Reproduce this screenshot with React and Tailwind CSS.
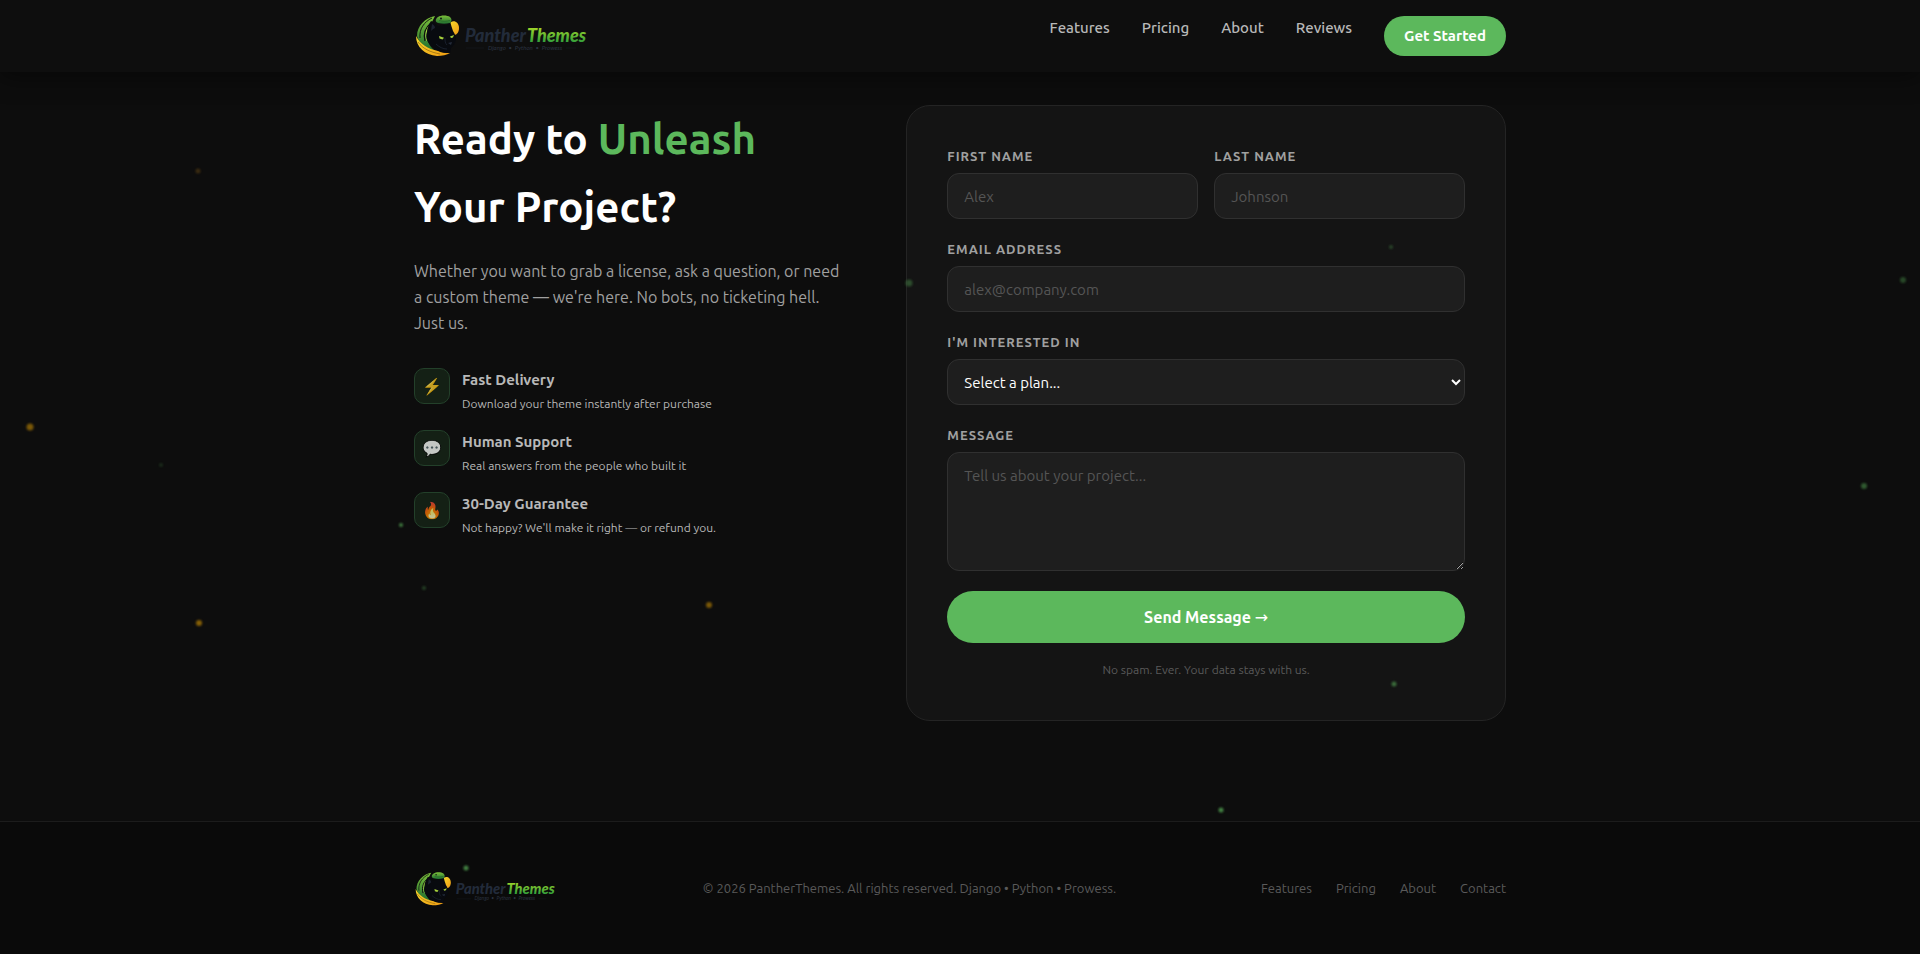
import React, { useId, useState } from 'react'

const navLinks = ['Features', 'Pricing', 'About', 'Reviews']
const footerLinks = ['Features', 'Pricing', 'About', 'Contact']

const perks = [
  { icon: '⚡', title: 'Fast Delivery', text: 'Download your theme instantly after purchase' },
  { icon: '💬', title: 'Human Support', text: 'Real answers from the people who built it' },
  { icon: '🔥', title: '30-Day Guarantee', text: "Not happy? We'll make it right — or refund you." }
]

// x / y are percentages of the viewport, size in px
const particles = [
  { x: 10.3, y: 17.9, size: 5, color: '#f5a623', opacity: 0.2 },
  { x: 1.58, y: 44.8, size: 7, color: '#ffb300', opacity: 0.45 },
  { x: 8.4, y: 48.7, size: 4, color: '#5cb85c', opacity: 0.18 },
  { x: 10.35, y: 65.3, size: 6, color: '#ffb300', opacity: 0.5 },
  { x: 20.88, y: 55.0, size: 4, color: '#5cb85c', opacity: 0.65 },
  { x: 22.1, y: 61.6, size: 4, color: '#5cb85c', opacity: 0.3 },
  { x: 36.95, y: 63.4, size: 6, color: '#ffb300', opacity: 0.45 },
  { x: 31.77, y: 21.1, size: 4, color: '#ffb300', opacity: 0.2 },
  { x: 47.33, y: 29.7, size: 7, color: '#5cb85c', opacity: 0.35 },
  { x: 72.47, y: 25.9, size: 4, color: '#5cb85c', opacity: 0.3 },
  { x: 99.1, y: 29.4, size: 6, color: '#5cb85c', opacity: 0.35 },
  { x: 97.08, y: 50.9, size: 6, color: '#5cb85c', opacity: 0.45 },
  { x: 72.63, y: 71.7, size: 5, color: '#5cb85c', opacity: 0.55 },
  { x: 63.59, y: 84.9, size: 5, color: '#5cb85c', opacity: 0.7 },
  { x: 24.27, y: 91.0, size: 5, color: '#5cb85c', opacity: 0.7 }
]

const fieldClass =
  'block w-full rounded-xl border border-[#303030] bg-[#1e1e1e] px-4 text-[15px] text-white placeholder-[#555] focus:outline-none focus:border-[#5cb85c]'

function Logo({ className }) {
  const id = useId()

  return (
    <svg viewBox="0 0 176 44" className={className} role="img" aria-label="PantherThemes">
      <defs>
        <linearGradient id={`${id}-text`} x1="0" y1="0" x2="0" y2="1">
          <stop offset="0.2" stopColor="#9bd32a" />
          <stop offset="0.85" stopColor="#2f9e3c" />
        </linearGradient>
        <linearGradient id={`${id}-green`} x1="0" y1="0" x2="0" y2="1">
          <stop offset="0" stopColor="#7cc03a" />
          <stop offset="1" stopColor="#1f6e30" />
        </linearGradient>
        <linearGradient id={`${id}-gold`} x1="0" y1="0" x2="1" y2="1">
          <stop offset="0" stopColor="#f7dc2e" />
          <stop offset="1" stopColor="#f09a12" />
        </linearGradient>
      </defs>

      {/* green tail swooping down the left side */}
      <path d="M21 2C11 4 3 12 3 22c2 8 10 13 18 15-6-5-9-11-7-19 1-4 3-8 4-10z" fill={`url(#${id}-green)`} />
      <path d="M18 4C10 8 5 15 6 24" fill="none" stroke="#0d0d0d" strokeWidth="0.9" />
      <path d="M17 9c-5 4-8 10-6 18" fill="none" stroke="#0d0d0d" strokeWidth="1.2" />
      <path d="M15 12c-3 4-4 9-2 15" fill="none" stroke="#b7dd45" strokeWidth="0.9" />

      {/* gold tail under the chin */}
      <path d="M2 22c0 11 9 19 21 20 5 0 10-1 13-3-4 0-8 0-12-2C14 35 6 30 2 22z" fill={`url(#${id}-gold)`} />
      <path d="M4 28c5 7 12 10 22 12" fill="none" stroke="#8a6410" strokeWidth="0.7" />

      {/* gold coil behind the ear */}
      <path d="M35 10c3-5 10-3 10 4 0 4-2 7-5 7z" fill={`url(#${id}-gold)`} />

      {/* panther head */}
      <path
        d="M17 7c3 1 5 3 7 5 3-1 6-1 9-1 1-2 2-3 3-4 1 4 2 7 3 10 2 3 3 6 3 9-1 4-3 6-5 8l-1 5c-7 0-13-2-17-6-6-4-8-9-6-15 0-4 2-8 4-11z"
        fill="#080a0f"
      />
      <path d="M18 10c2 1 3 2 3 4-2 1-3 2-4 3z" fill="#1c2230" />
      <path d="M31 24c0 3 0 5 2 7M22 30c3 3 7 5 11 5" fill="none" stroke="#1d2534" strokeWidth="0.8" />
      <path d="M25 22l5 1.800-1.500 1.800-3-1z" fill="#a5cf3c" />
      <path d="M36 22.500l4-1.500-1 2.500-2 0.500z" fill="#a5cf3c" />
      <path d="M34 29l4-1-1 3z" fill="#242c3b" />

      {/* snake head on top */}
      <path d="M24 3c3-2 9-2 12 0 2 2 2 4 0 6-4 1-8 1-12 0-3-1-3-4 0-6z" fill={`url(#${id}-green)`} />
      <path d="M25 6.500c4 1 7 1 11 0" fill="none" stroke="#1c5f29" strokeWidth="0.7" />
      <circle cx="27" cy="4.500" r="0.9" fill="#0b0d12" />

      <text y="28" className="font-['Lato','Noto_Sans',sans-serif] text-[18px] font-black italic" fill="#222b3a">
        <tspan x="51">Panther</tspan>
        <tspan x="113" fill={`url(#${id}-text)`}>Themes</tspan>
      </text>
      <path d="M52 34h18M152 34h10" stroke="#1b212b" strokeWidth="0.4" />
      <text x="74" y="36" className="font-['Lato','Noto_Sans',sans-serif] text-[6px] italic" fill="#2b3340">
        Django &nbsp;•&nbsp; Python &nbsp;•&nbsp; Prowess
      </text>
    </svg>
  )
}

function Particles() {
  return (
    <div className="pointer-events-none fixed inset-0 z-50 overflow-hidden" aria-hidden="true">
      {particles.map((p, i) => (
        <span
          key={i}
          className="absolute -translate-x-1/2 -translate-y-1/2 rounded-full blur-[1px]"
          style={{
            left: `${p.x}%`,
            top: `${p.y}%`,
            width: p.size,
            height: p.size,
            background: p.color,
            opacity: p.opacity
          }}
        />
      ))}
    </div>
  )
}

function Field({ label, id, children }) {
  return (
    <div>
      <label htmlFor={id} className="mb-[6px] block text-[13px] leading-[21px] font-bold tracking-[1px] text-[#a0a0a0] uppercase">
        {label}
      </label>
      {children}
    </div>
  )
}

function ContactForm() {
  const [formData, setFormData] = useState({ firstName: '', lastName: '', email: '', plan: '', message: '' })

  const handleChange = (e) => {
    const { name, value } = e.target
    setFormData(prev => ({ ...prev, [name]: value }))
  }

  return (
    <form
      onSubmit={(e) => e.preventDefault()}
      className="flex flex-col gap-5 rounded-3xl border border-[#242424] bg-[#141414] p-10"
    >
      <div className="grid grid-cols-2 gap-4">
        <Field label="First Name" id="firstName">
          <input id="firstName" name="firstName" type="text" placeholder="Alex" value={formData.firstName} onChange={handleChange} className={`${fieldClass} h-[46px]`} />
        </Field>
        <Field label="Last Name" id="lastName">
          <input id="lastName" name="lastName" type="text" placeholder="Johnson" value={formData.lastName} onChange={handleChange} className={`${fieldClass} h-[46px]`} />
        </Field>
      </div>

      <Field label="Email Address" id="email">
        <input id="email" name="email" type="email" placeholder="alex@company.com" value={formData.email} onChange={handleChange} className={`${fieldClass} h-[46px]`} />
      </Field>

      <Field label="I'm Interested In" id="plan">
        <select id="plan" name="plan" value={formData.plan} onChange={handleChange} className={`${fieldClass} h-[46px] pr-0 pl-3`}>
          <option value="">Select a plan...</option>
          <option value="single">Single License</option>
          <option value="team">Team License</option>
          <option value="custom">Custom Theme</option>
        </select>
      </Field>

      <Field label="Message" id="message">
        <textarea id="message" name="message" placeholder="Tell us about your project..." value={formData.message} onChange={handleChange} className={`${fieldClass} h-[119px] resize-y py-3`} />
      </Field>

      <div>
        <button type="submit" className="h-[52px] w-full rounded-full bg-[#5cb85c] text-base font-bold text-white transition-colors hover:bg-[#4cae4c]">
          Send Message <span className="font-['DejaVu_Sans',sans-serif] font-normal">→</span>
        </button>
        <p className="mt-4 text-center text-[12px] leading-[21px] text-[#5a5a5a]">No spam. Ever. Your data stays with us.</p>
      </div>
    </form>
  )
}

export default function App() {
  return (
    <div className="flex min-h-screen flex-col bg-[#0d0d0d] font-['Ubuntu','Noto_Sans',sans-serif] text-white">
      <Particles />

      <header className="relative z-10 bg-[#0e0e0e] shadow-[0_4px_24px_rgba(0,0,0,0.5)]">
        <div className="mx-auto flex h-[72px] max-w-[1140px] items-center justify-between px-6">
          <a href="#top">
            <Logo className="h-11 w-auto" />
          </a>
          <nav className="flex items-start gap-8">
            {navLinks.map(link => (
              <a key={link} href={`#${link.toLowerCase()}`} className="text-[15px] leading-6 font-medium text-[#b8b8b8] hover:text-white">
                {link}
              </a>
            ))}
            <a href="#start" className="rounded-full bg-[#5cb85c] px-5 py-2 text-[15px] leading-6 font-bold text-white hover:bg-[#4cae4c]">
              Get Started
            </a>
          </nav>
        </div>
      </header>

      <main className="mx-auto grid w-full max-w-[1140px] grid-cols-[1fr_1.4fr] items-start gap-16 px-6 pt-[33px] pb-[100px]">
        <section>
          <h1 className="text-[42px] leading-[68px] font-bold">
            Ready to <span className="text-[#5cb85c]">Unleash</span>
            <br />
            Your Project?
          </h1>
          <p className="mt-[17px] text-base leading-[26px] text-[#a0a0a0]">
            Whether you want to grab a license, ask a question, or need a custom theme — we're here. No bots, no ticketing hell. Just us.
          </p>

          <ul className="mt-8 flex flex-col gap-[14px]">
            {perks.map(perk => (
              <li key={perk.title} className="flex items-start gap-3">
                <span className="flex size-9 shrink-0 items-center justify-center rounded-[10px] border border-[#23402a] bg-[#142015] text-base">
                  <span className="opacity-75">{perk.icon}</span>
                </span>
                <div className="text-[#b8b8b8]">
                  <h2 className="text-[15px] leading-6 font-bold">{perk.title}</h2>
                  <p className="text-[12px] leading-6">{perk.text}</p>
                </div>
              </li>
            ))}
          </ul>
        </section>

        <ContactForm />
      </main>

      <footer className="grow border-t border-[#1c1c1c] bg-[#0a0a0a]">
        <div className="mx-auto flex max-w-[1140px] items-center justify-between px-6 py-[49px] text-[13px] text-[#5a5a5a]">
          <Logo className="h-9 w-auto" />
          <p>© 2026 PantherThemes. All rights reserved. Django • Python • Prowess.</p>
          <nav className="flex gap-6">
            {footerLinks.map(link => (
              <a key={link} href={`#${link.toLowerCase()}`} className="hover:text-white">
                {link}
              </a>
            ))}
          </nav>
        </div>
      </footer>
    </div>
  )
}
